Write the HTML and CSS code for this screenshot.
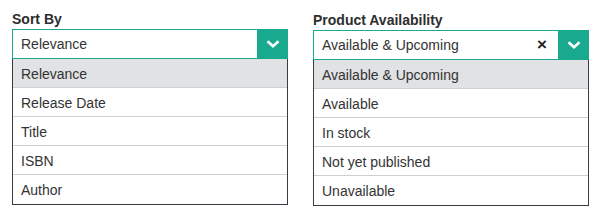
FILE: index.html
```html
<!DOCTYPE html>
<html lang="en">
<head>
  <meta charset="UTF-8">
  <title>Filters</title>
  <link rel="stylesheet" href="styles.css">
</head>
<body>

  <div class="filters">

    <!-- Sort By -->
    <div class="filter">
      <div class="filter-label">Sort By</div>
      <div class="select">
        <div class="select-value">Relevance</div>
        <div class="select-toggle">
          <svg width="14" height="8" viewBox="0 0 14 8"><path d="M1.5 1.2 L7 6.2 L12.5 1.2" fill="none" stroke="#fff" stroke-width="2.6"/></svg>
        </div>
      </div>
      <ul class="select-menu">
        <li class="active">Relevance</li>
        <li>Release Date</li>
        <li>Title</li>
        <li>ISBN</li>
        <li>Author</li>
      </ul>
    </div>

    <!-- Product Availability -->
    <div class="filter filter-right">
      <div class="filter-label">Product Availability</div>
      <div class="select">
        <div class="select-value">
          Available &amp; Upcoming
          <span class="select-clear">&times;</span>
        </div>
        <div class="select-toggle">
          <svg width="14" height="8" viewBox="0 0 14 8"><path d="M1.5 1.2 L7 6.2 L12.5 1.2" fill="none" stroke="#fff" stroke-width="2.6"/></svg>
        </div>
      </div>
      <ul class="select-menu">
        <li class="active">Available &amp; Upcoming</li>
        <li>Available</li>
        <li>In stock</li>
        <li>Not yet published</li>
        <li>Unavailable</li>
      </ul>
    </div>

  </div>

</body>
</html>
```

FILE: styles.css
```css
body {
  margin: 0;
  font-family: "Liberation Sans", Arial, sans-serif;
  background: #ffffff;
  color: #333;
}

.filters {
  display: flex;
  gap: 25px;
  padding: 11px 12px 0;
}

.filter {
  width: 276px;
}

.filter-right {
  padding-top: 1px;
}

.filter-label {
  font-size: 14px;
  font-weight: bold;
  line-height: 16px;
  margin-bottom: 2px;
  color: #2e2e2e;
}

.select {
  display: flex;
  height: 30px;
}

.select-value {
  flex: 1;
  display: flex;
  align-items: center;
  justify-content: space-between;
  border: 1px solid #19a98f;
  border-right: none;
  padding: 0 8px;
  font-size: 14px;
  color: #333;
}

.select-clear {
  font-size: 17px;
  font-weight: bold;
  color: #222;
  margin-right: 3px;
}

.select-toggle {
  width: 31px;
  background: #19a98f;
  display: flex;
  align-items: center;
  justify-content: center;
}

.select-menu {
  list-style: none;
  margin: 0;
  padding: 0;
  border: 1px solid #3b3b45;
  border-top: none;
  width: 276px;
  box-sizing: border-box;
}

.select-menu li {
  height: 27px;
  padding: 1px 8px 0;
  line-height: 28px;
  font-size: 14px;
  border-bottom: 1px solid #cfcfcf;
}

.select-menu li:last-child {
  border-bottom: none;
  height: 28px;
}

.select-menu li.active {
  background: #e1e2e3;
}
```
